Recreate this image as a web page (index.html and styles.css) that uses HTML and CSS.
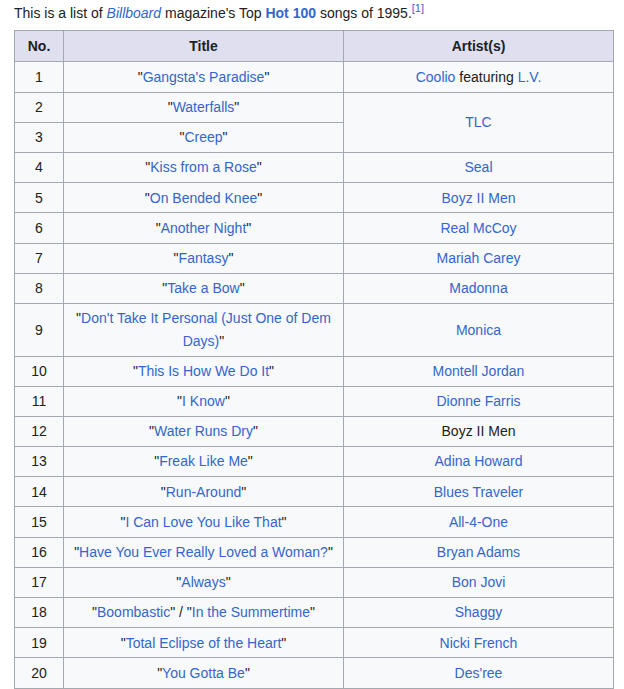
FILE: index.html
```html
<!DOCTYPE html>
<html>
<head>
<meta charset="utf-8">
<link rel="stylesheet" href="styles.css">
</head>
<body>
<div class="page">
<p class="intro">This is a list of <a class="lnk"><i>Billboard</i></a> magazine's Top <a class="lnk"><b>Hot 100</b></a> songs of 1995.<sup class="ref">[1]</sup></p>
<table class="wikitable">
<colgroup><col class="c-no"><col class="c-title"><col class="c-artist"></colgroup>
<thead>
<tr><th>No.</th><th>Title</th><th>Artist(s)</th></tr>
</thead>
<tbody>
<tr><td>1</td><td>"<a class="lnk">Gangsta's Paradise</a>"</td><td><a class="lnk">Coolio</a> featuring <a class="lnk">L.V.</a></td></tr>
<tr><td>2</td><td>"<a class="lnk">Waterfalls</a>"</td><td rowspan="2"><a class="lnk">TLC</a></td></tr>
<tr><td>3</td><td>"<a class="lnk">Creep</a>"</td></tr>
<tr><td>4</td><td>"<a class="lnk">Kiss from a Rose</a>"</td><td><a class="lnk">Seal</a></td></tr>
<tr><td>5</td><td>"<a class="lnk">On Bended Knee</a>"</td><td><a class="lnk">Boyz II Men</a></td></tr>
<tr><td>6</td><td>"<a class="lnk">Another Night</a>"</td><td><a class="lnk">Real McCoy</a></td></tr>
<tr><td>7</td><td>"<a class="lnk">Fantasy</a>"</td><td><a class="lnk">Mariah Carey</a></td></tr>
<tr><td>8</td><td>"<a class="lnk">Take a Bow</a>"</td><td><a class="lnk">Madonna</a></td></tr>
<tr><td>9</td><td>"<a class="lnk">Don't Take It Personal (Just One of Dem Days)</a>"</td><td><a class="lnk">Monica</a></td></tr>
<tr><td>10</td><td>"<a class="lnk">This Is How We Do It</a>"</td><td><a class="lnk">Montell Jordan</a></td></tr>
<tr><td>11</td><td>"<a class="lnk">I Know</a>"</td><td><a class="lnk">Dionne Farris</a></td></tr>
<tr><td>12</td><td>"<a class="lnk">Water Runs Dry</a>"</td><td>Boyz II Men</td></tr>
<tr><td>13</td><td>"<a class="lnk">Freak Like Me</a>"</td><td><a class="lnk">Adina Howard</a></td></tr>
<tr><td>14</td><td>"<a class="lnk">Run-Around</a>"</td><td><a class="lnk">Blues Traveler</a></td></tr>
<tr><td>15</td><td>"<a class="lnk">I Can Love You Like That</a>"</td><td><a class="lnk">All-4-One</a></td></tr>
<tr><td>16</td><td>"<a class="lnk">Have You Ever Really Loved a Woman?</a>"</td><td><a class="lnk">Bryan Adams</a></td></tr>
<tr><td>17</td><td>"<a class="lnk">Always</a>"</td><td><a class="lnk">Bon Jovi</a></td></tr>
<tr><td>18</td><td>"<a class="lnk">Boombastic</a>" / "<a class="lnk">In the Summertime</a>"</td><td><a class="lnk">Shaggy</a></td></tr>
<tr><td>19</td><td>"<a class="lnk">Total Eclipse of the Heart</a>"</td><td><a class="lnk">Nicki French</a></td></tr>
<tr><td>20</td><td>"<a class="lnk">You Gotta Be</a>"</td><td><a class="lnk">Des'ree</a></td></tr>
</tbody>
</table>
</div>
</body>
</html>
```

FILE: styles.css
```css
html, body {
  margin: 0;
  padding: 0;
  background: #ffffff;
}
body {
  font-family: "Liberation Sans", Arial, sans-serif;
  font-size: 14px;
  color: #202122;
}
.page {
  padding: 2px 0 0 14px;
}
.intro {
  margin: 0 0 6px 0;
  line-height: 22.4px;
}
.lnk {
  color: #3366cc;
  text-decoration: none;
}
.ref {
  color: #3366cc;
  font-size: 11px;
  line-height: 1;
  vertical-align: super;
}
.wikitable {
  border-collapse: collapse;
  width: 599px;
  table-layout: fixed;
  background: #f8f9fa;
  border: 1px solid #a2a9b1;
  line-height: 22.4px;
}
.c-no { width: 49px; }
.c-title { width: 280px; }
.c-artist { width: 270px; }
.wikitable th,
.wikitable td {
  border: 1px solid #a2a9b1;
  padding: 3.4px 5.6px;
  text-align: center;
  vertical-align: middle;
}
.wikitable th {
  background: #dfdff0;
  font-weight: bold;
  padding: 3.8px 5.6px;
}
```
